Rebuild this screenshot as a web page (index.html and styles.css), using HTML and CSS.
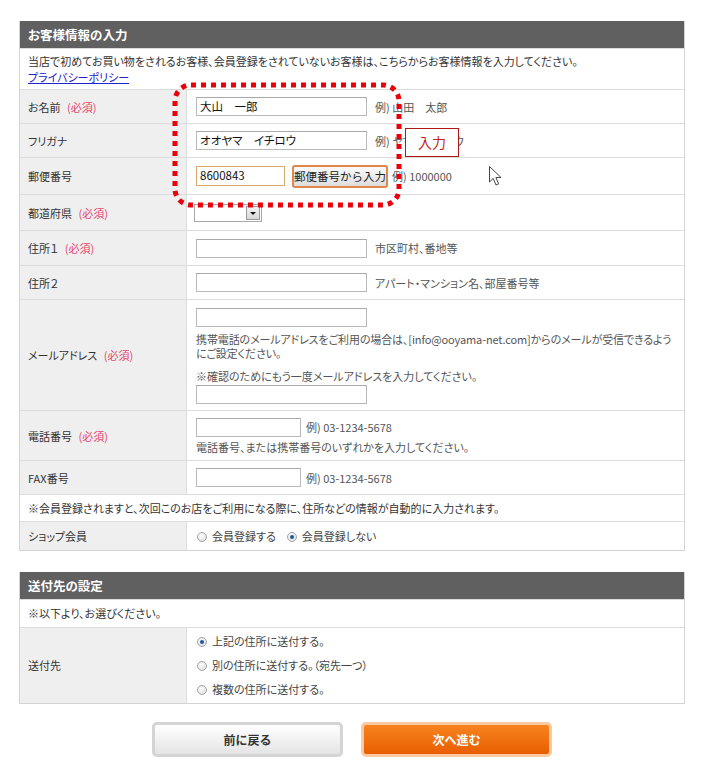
FILE: index.html
```html
<!DOCTYPE html>
<html lang="ja">
<head>
    <meta charset="UTF-8">
    <title>お客様情報の入力</title>
    <link rel="stylesheet" href="styles.css">
</head>
<body>
<div class="page">
    <div class="panel">
        <h2 class="panel-title">お客様情報の入力</h2>
        <table class="form">
            <tr class="row-intro">
                <td colspan="2" class="note">当店で初めてお買い物をされるお客様、会員登録をされていないお客様は、こちらからお客様情報を入力してください。<br><a href="#">プライバシーポリシー</a></td>
            </tr>
            <tr class="row-34">
                <th>お名前 <span class="req">(必須)</span></th>
                <td><span class="field filled">大山　一郎</span><span class="hint">例) 山田　太郎</span></td>
            </tr>
            <tr class="row-34">
                <th>フリガナ</th>
                <td><span class="field filled">オオヤマ　イチロウ</span><span class="hint">例) ヤマダ　タロウ</span></td>
            </tr>
            <tr class="row-zip">
                <th>郵便番号</th>
                <td><span class="field zip filled">8600843</span><button class="zip-btn">郵便番号から入力</button><span class="hint near">例) 1000000</span></td>
            </tr>
            <tr class="row-pref">
                <th>都道府県 <span class="req">(必須)</span></th>
                <td class="pref-cell"><span class="select"><span class="select-arrow"></span></span></td>
            </tr>
            <tr class="row-35">
                <th>住所１ <span class="req">(必須)</span></th>
                <td><span class="field"></span><span class="hint">市区町村、番地等</span></td>
            </tr>
            <tr class="row-34">
                <th>住所２</th>
                <td><span class="field"></span><span class="hint">アパート・マンション名、部屋番号等</span></td>
            </tr>
            <tr class="row-mail">
                <th>メールアドレス <span class="req">(必須)</span></th>
                <td class="mail-cell">
                    <span class="field block"></span>
                    <p class="desc">携帯電話のメールアドレスをご利用の場合は、[info@ooyama-net.com]からのメールが受信できるようにご設定ください。</p>
                    <p class="desc confirm">※確認のためにもう一度メールアドレスを入力してください。</p>
                    <span class="field block"></span>
                </td>
            </tr>
            <tr class="row-tel">
                <th>電話番号 <span class="req">(必須)</span></th>
                <td class="tel-cell">
                    <span class="field short"></span><span class="hint tight">例) 03-1234-5678</span>
                    <p class="desc">電話番号、または携帯番号のいずれかを入力してください。</p>
                </td>
            </tr>
            <tr class="row-34">
                <th>FAX番号</th>
                <td><span class="field short"></span><span class="hint tight">例) 03-1234-5678</span></td>
            </tr>
            <tr class="row-27">
                <td colspan="2" class="note">※会員登録されますと、次回このお店をご利用になる際に、住所などの情報が自動的に入力されます。</td>
            </tr>
            <tr class="row-28">
                <th>ショップ会員</th>
                <td><label class="choice"><span class="radio"></span>会員登録する</label><label class="choice"><span class="radio on"></span>会員登録しない</label></td>
            </tr>
        </table>
    </div>

    <div class="panel second">
        <h2 class="panel-title">送付先の設定</h2>
        <table class="form">
            <tr class="row-28">
                <td colspan="2" class="note">※以下より、お選びください。</td>
            </tr>
            <tr class="row-dest">
                <th>送付先</th>
                <td>
                    <label class="choice line"><span class="radio on"></span>上記の住所に送付する。</label>
                    <label class="choice line"><span class="radio"></span>別の住所に送付する。（宛先一つ）</label>
                    <label class="choice line"><span class="radio"></span>複数の住所に送付する。</label>
                </td>
            </tr>
        </table>
    </div>

    <div class="actions">
        <button class="btn back">前に戻る</button>
        <button class="btn next">次へ進む</button>
    </div>

    <!-- annotation overlays -->
    <svg class="highlight" width="236" height="132" viewBox="0 0 236 132">
        <rect x="5" y="5" width="224" height="120" rx="16" fill="none" stroke="#e8000b" stroke-width="5" stroke-dasharray="5 5"/>
    </svg>
    <div class="callout">入力</div>
    <svg class="cursor" width="16" height="22" viewBox="0 0 16 22">
        <path d="M1.5 1.5 L1.5 17 L5.2 13.4 L8 20 L10.6 18.9 L7.9 12.5 L13 12.5 Z" fill="#fff" stroke="#444" stroke-width="1" stroke-linejoin="round"/>
    </svg>
</div>
</body>
</html>
```

FILE: styles.css
```css
body {
    margin: 0;
    background-color: #fff;
    font-family: "Noto Sans CJK JP", "Liberation Sans", sans-serif;
    font-size: 11px;
    color: #333;
    font-feature-settings: "palt";
}
.page {
    position: relative;
    width: 666px;
    margin-left: 19px;
    padding-top: 21px;
    padding-bottom: 20px;
}
.panel {
    border: 1px solid #d4d4d4;
    border-top: none;
}
.panel.second {
    margin-top: 21px;
}
.panel-title {
    margin: 0;
    height: 27px;
    line-height: 27px;
    padding-left: 8px;
    background-color: #606060;
    color: #fff;
    font-size: 12.5px;
    font-weight: bold;
}
.form {
    width: 100%;
    border-collapse: collapse;
}
.form th,
.form td {
    border-top: 1px solid #dcdcdc;
    padding: 0 9px;
    vertical-align: middle;
    text-align: left;
}
.form th {
    width: 149px;
    padding-left: 8px;
    background-color: #efefef;
    border-right: 1px solid #dcdcdc;
    font-weight: normal;
    color: #333;
}
.form td.note {
    padding: 0 8px;
    background-color: #fff;
}
.row-intro td.note {
    padding-top: 4px;
    padding-bottom: 4px;
    line-height: 16px;
}
.row-intro { height: 41px; }
.row-34 { height: 34px; }
.row-35 { height: 35px; }
.row-zip { height: 37px; }
.row-pref { height: 36px; }
.row-mail { height: 111px; }
.row-tel { height: 50px; }
.row-27 { height: 27px; }
.row-28 { height: 28px; }
.row-dest { height: 76px; }

.note a {
    color: #2222cc;
}
.req {
    color: #e2486e;
    margin-left: 4px;
}
.hint {
    color: #555;
    margin-left: 8px;
    vertical-align: middle;
}
.hint.tight {
    margin-left: 5px;
}
.hint.near {
    margin-left: 4px;
}

/* inputs */
.field {
    display: inline-block;
    box-sizing: border-box;
    width: 171px;
    height: 19px;
    line-height: 17px;
    padding: 0 3px;
    border: 1px solid #b9b9b9;
    border-top-color: #a9a9a9;
    background-color: #fff;
    color: #111;
    font-size: 11.5px;
    vertical-align: middle;
}
.field.short {
    width: 105px;
}
.field.zip {
    width: 89px;
    height: 20px;
    border-color: #d8a868;
}
.field.block {
    display: block;
}
.zip-btn {
    box-sizing: border-box;
    height: 23px;
    width: 96px;
    margin-left: 7px;
    padding: 0;
    border: 2px solid #e0884a;
    border-radius: 3px;
    background: linear-gradient(#fafafa, #dedede);
    font-family: inherit;
    font-size: 11.5px;
    color: #222;
    vertical-align: middle;
}
.pref-cell {
    padding-left: 7px !important;
}
.select {
    position: relative;
    display: inline-block;
    box-sizing: border-box;
    width: 68px;
    height: 18px;
    border: 1px solid #a8a8a8;
    background-color: #fff;
    vertical-align: middle;
    margin-top: 1px;
}
.select-arrow {
    position: absolute;
    right: 1px;
    top: 1px;
    width: 12px;
    height: 12px;
    border: 1px solid #9a9a9a;
    background: linear-gradient(#f4f4f4, #d8d8d8);
}
.select-arrow::after {
    content: "";
    position: absolute;
    left: 3px;
    top: 5px;
    border-left: 3px solid transparent;
    border-right: 3px solid transparent;
    border-top: 3px solid #111;
}
.mail-cell {
    padding-top: 7px !important;
    padding-bottom: 6px !important;
}
.desc {
    margin: 0;
    color: #555;
    line-height: 14px;
}
.mail-cell .desc {
    margin-top: 5px;
    letter-spacing: -0.12px;
}
.mail-cell .desc.confirm {
    margin-top: 9px;
    margin-bottom: 2px;
    letter-spacing: 0;
}
.tel-cell .desc {
    margin-top: 3px;
}

/* radios */
.choice {
    color: #444;
    margin-right: 10px;
}
.choice.line {
    display: block;
    line-height: 24px;
}
.radio {
    position: relative;
    display: inline-block;
    box-sizing: border-box;
    width: 10px;
    height: 10px;
    margin: 0 5px 0 1px;
    border: 1px solid #a6a6a6;
    border-radius: 50%;
    background: radial-gradient(circle at 40% 35%, #fff, #d6d6d6);
    vertical-align: -1px;
}
.radio.on::after {
    content: "";
    position: absolute;
    left: 2px;
    top: 2px;
    width: 4px;
    height: 4px;
    border-radius: 50%;
    background-color: #1c5a9c;
}

/* buttons */
.actions {
    display: flex;
    justify-content: center;
    gap: 18px;
    margin-top: 18px;
}
.btn {
    box-sizing: border-box;
    width: 191px;
    height: 35px;
    border-radius: 5px;
    font-family: inherit;
    font-size: 12px;
    font-weight: bold;
    cursor: pointer;
}
.btn.back {
    border: 3px solid #d4d4d4;
    background: linear-gradient(#ffffff, #e4e4e4);
    color: #333;
}
.btn.next {
    border: 3px solid #fdc9a1;
    background: linear-gradient(#f7841f, #e85e00);
    color: #fff;
}

/* overlays */
.highlight {
    position: absolute;
    left: 151px;
    top: 80px;
}
.callout {
    position: absolute;
    left: 386px;
    top: 128px;
    box-sizing: border-box;
    width: 54px;
    height: 29px;
    line-height: 27px;
    border: 1px solid #b01818;
    background-color: #fff;
    color: #c81e1e;
    font-size: 14px;
    text-align: center;
}
.cursor {
    position: absolute;
    left: 469px;
    top: 165px;
}
```
